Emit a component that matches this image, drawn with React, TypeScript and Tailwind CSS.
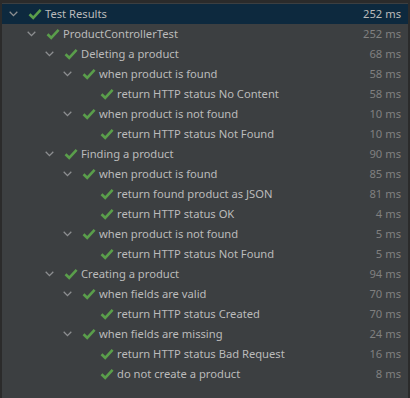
import React from "react";

interface Node {
  label: string;
  time: string;
  level: number;
  leaf?: boolean;
}

const rows: Node[] = [
  { label: "Test Results", time: "252 ms", level: 0 },
  { label: "ProductControllerTest", time: "252 ms", level: 1 },
  { label: "Deleting a product", time: "68 ms", level: 2 },
  { label: "when product is found", time: "58 ms", level: 3 },
  { label: "return HTTP status No Content", time: "58 ms", level: 4, leaf: true },
  { label: "when product is not found", time: "10 ms", level: 3 },
  { label: "return HTTP status Not Found", time: "10 ms", level: 4, leaf: true },
  { label: "Finding a product", time: "90 ms", level: 2 },
  { label: "when product is found", time: "85 ms", level: 3 },
  { label: "return found product as JSON", time: "81 ms", level: 4, leaf: true },
  { label: "return HTTP status OK", time: "4 ms", level: 4, leaf: true },
  { label: "when product is not found", time: "5 ms", level: 3 },
  { label: "return HTTP status Not Found", time: "5 ms", level: 4, leaf: true },
  { label: "Creating a product", time: "94 ms", level: 2 },
  { label: "when fields are valid", time: "70 ms", level: 3 },
  { label: "return HTTP status Created", time: "70 ms", level: 4, leaf: true },
  { label: "when fields are missing", time: "24 ms", level: 3 },
  { label: "return HTTP status Bad Request", time: "16 ms", level: 4, leaf: true },
  { label: "do not create a product", time: "8 ms", level: 4, leaf: true },
];

const indents = ["pl-[7px]", "pl-[25px]", "pl-[43px]", "pl-[61px]", "pl-[79px]"];

function Chevron() {
  return (
    <svg width="9" height="6" viewBox="0 0 9 6" className="shrink-0">
      <path d="M0.7 0.8 L4.5 4.6 L8.3 0.8" fill="none" stroke="#8d8f91" strokeWidth="1.3" />
    </svg>
  );
}

function Check() {
  return (
    <svg width="14" height="12" viewBox="0 0 14 12" className="shrink-0">
      <path d="M1.5 6.2 L5.2 9.8 L12.6 1.8" fill="none" stroke="#5a9e4b" strokeWidth="2.6" strokeLinecap="butt" />
    </svg>
  );
}

export default function App() {
  return (
    <div className="w-[410px] h-[398px] bg-[#3c3f41] border-t-[3px] border-l-[2px] border-r-[2px] border-[#2b2b2b] font-['Noto_Sans',sans-serif] text-[11.2px] overflow-hidden">
      <div className="pt-px">
        {rows.map((r, i) => (
          <div
            key={i}
            className={`h-[20px] flex items-center pr-[7px] ${indents[r.level]} ${i === 0 ? "bg-[#0d293e]" : ""}`}
          >
            <div className="w-[17px] flex items-center">{r.leaf ? null : <Chevron />}</div>
            <div className="w-[17px] flex items-center ml-[2px]">
              <Check />
            </div>
            <span className="text-[#bbbbbb] whitespace-nowrap">{r.label}</span>
            <span className={`ml-auto whitespace-nowrap ${i === 0 ? "text-[#bbbbbb]" : "text-[#808080]"}`}>
              {r.time}
            </span>
          </div>
        ))}
      </div>
    </div>
  );
}
